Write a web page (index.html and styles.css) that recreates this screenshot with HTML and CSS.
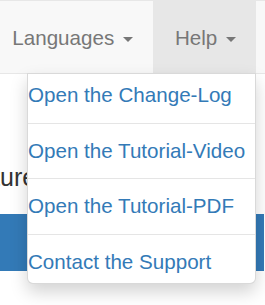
FILE: index.html
```html
<!DOCTYPE html>
<html>
  <head>
    <title>Help menu</title>
    <link rel="stylesheet" href="styles.css">
  </head>
  <body>
    <nav class="navbar">
      <ul class="nav">
        <li class="nav-item">
          <a class="nav-link">Languages <span class="caret"></span></a>
        </li>
        <li class="nav-item open">
          <a class="nav-link">Help <span class="caret"></span></a>
          <ul class="dropdown-menu">
            <li><a class="menu-link">Open the Change-Log</a></li>
            <li class="divider"></li>
            <li><a class="menu-link">Open the Tutorial-Video</a></li>
            <li class="divider"></li>
            <li><a class="menu-link">Open the Tutorial-PDF</a></li>
            <li class="divider"></li>
            <li><a class="menu-link">Contact the Support</a></li>
          </ul>
        </li>
      </ul>
    </nav>

    <main class="content">
      <h4 class="page-title">Features</h4>
      <div class="banner"></div>
    </main>
  </body>
</html>
```

FILE: styles.css
```css
html {
  height: 100%;
}
body {
  min-height: 100%;
  margin: 0;
  font-family: "Liberation Sans", Arial, sans-serif;
  font-size: 20.6px;
  color: #333;
  background: #fff;
}
.navbar {
  display: flex;
  justify-content: flex-end;
  padding-right: 9px;
  background-color: #f8f8f8;
  border-top: 1px solid #e7e7e7;
  border-bottom: 1px solid #e7e7e7;
  position: relative;
  z-index: 10;
}
.nav {
  display: flex;
  flex-shrink: 0;
  margin: 0;
  padding: 0;
  list-style: none;
}
.nav-item {
  position: relative;
}
.nav-link {
  display: block;
  padding: 21.5px 20px 21.5px 22px;
  line-height: 29px;
  color: #777;
  white-space: nowrap;
  cursor: pointer;
}
.nav-item.open > .nav-link {
  background-color: #e7e7e7;
}
.caret {
  display: inline-block;
  width: 0;
  height: 0;
  margin-left: 3px;
  vertical-align: middle;
  border-top: 5px solid;
  border-left: 5px solid transparent;
  border-right: 5px solid transparent;
}
.dropdown-menu {
  position: absolute;
  top: 100%;
  right: 0;
  min-width: 229px;
  margin: 0;
  padding: 7px 0;
  list-style: none;
  background-color: #fff;
  border: 1px solid rgba(0, 0, 0, 0.15);
  border-radius: 0 0 6px 6px;
  box-shadow: 0 8px 17px rgba(0, 0, 0, 0.175);
  box-sizing: border-box;
}
.menu-link {
  display: block;
  padding: 0 8px 0 0;
  line-height: 28.6px;
  color: #337ab7;
  white-space: nowrap;
  cursor: pointer;
}
.divider {
  height: 1px;
  margin: 13px 0;
  background-color: #e5e5e5;
}
.content {
  padding-top: 90px;
}
.page-title {
  margin: 0 0 0 -50px;
  font-size: 25px;
  font-weight: 500;
  line-height: 27.5px;
  white-space: nowrap;
}
.banner {
  height: 57px;
  margin: 22px 1px 0 0;
  background-color: #337ab7;
}
```
